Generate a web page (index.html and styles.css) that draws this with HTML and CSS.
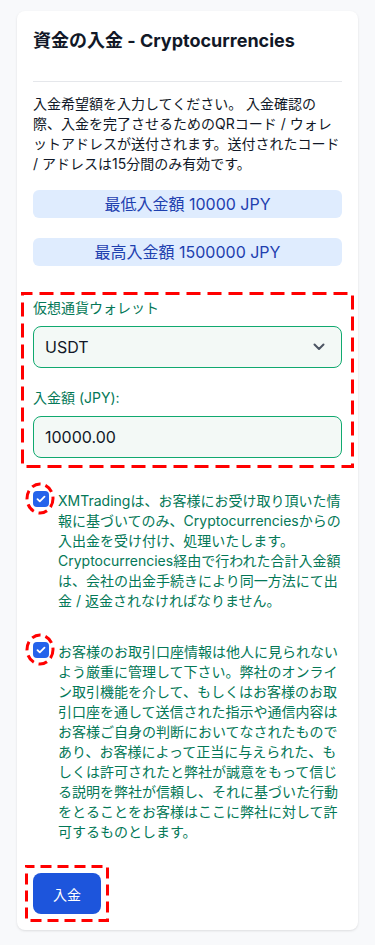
FILE: index.html
```html
<!DOCTYPE html>
<html lang="ja">
<head>
<meta charset="utf-8">
<title>資金の入金 - Cryptocurrencies</title>
<link rel="stylesheet" href="styles.css">
</head>
<body>
<div class="card">
  <h2 class="title">資金の入金 - Cryptocurrencies</h2>
  <hr class="divider">
  <p class="intro">入金希望額を入力してください。 入金確認の際、入金を完了させるためのQRコード / ウォレットアドレスが送付されます。送付されたコード / アドレスは15分間のみ有効です。</p>
  <div class="limit">最低入金額 10000 JPY</div>
  <div class="limit limit-max">最高入金額 1500000 JPY</div>

  <div class="form-group">
    <svg class="dash-frame" aria-hidden="true"><rect class="dash-rect big"/></svg>
    <label class="field-label">仮想通貨ウォレット</label>
    <div class="select">
      <span>USDT</span>
      <svg class="chevron" width="12" height="8" viewBox="0 0 12 8"><polyline points="1.5,1.5 6,6 10.5,1.5" fill="none" stroke="#4b5563" stroke-width="2" stroke-linecap="round" stroke-linejoin="round"/></svg>
    </div>
    <label class="field-label label-amount">入金額 (JPY):</label>
    <div class="input">10000.00</div>
  </div>

  <div class="check-item first">
    <span class="checkbox"><svg width="10" height="8" viewBox="0 0 10 8"><polyline points="1.5,4.2 3.8,6.4 8.5,1.6" fill="none" stroke="#fff" stroke-width="1.8" stroke-linecap="round" stroke-linejoin="round"/></svg><svg class="ring" width="30" height="33" viewBox="0 0 30 33" aria-hidden="true"><ellipse cx="15" cy="16.5" rx="13" ry="14.5" fill="none" stroke="#ff0000" stroke-width="3" stroke-dasharray="9 5"/></svg></span>
    <p class="check-text">XMTradingは、お客様にお受け取り頂いた情報に基づいてのみ、Cryptocurrenciesからの入出金を受け付け、処理いたします。Cryptocurrencies経由で行われた合計入金額は、会社の出金手続きにより同一方法にて出金 / 返金されなければなりません。</p>
  </div>

  <div class="check-item second">
    <span class="checkbox"><svg width="10" height="8" viewBox="0 0 10 8"><polyline points="1.5,4.2 3.8,6.4 8.5,1.6" fill="none" stroke="#fff" stroke-width="1.8" stroke-linecap="round" stroke-linejoin="round"/></svg><svg class="ring" width="30" height="33" viewBox="0 0 30 33" aria-hidden="true"><ellipse cx="15" cy="16.5" rx="13" ry="14.5" fill="none" stroke="#ff0000" stroke-width="3" stroke-dasharray="9 5"/></svg></span>
    <p class="check-text">お客様のお取引口座情報は他人に見られないよう厳重に管理して下さい。弊社のオンライン取引機能を介して、もしくはお客様のお取引口座を通して送信された指示や通信内容はお客様ご自身の判断においてなされたものであり、お客様によって正当に与えられた、もしくは許可されたと弊社が誠意をもって信じる説明を弊社が信頼し、それに基づいた行動をとることをお客様はここに弊社に対して許可するものとします。</p>
  </div>

  <div class="submit-wrap">
    <svg class="dash-frame" aria-hidden="true"><rect class="dash-rect small"/></svg>
    <button class="submit">入金</button>
  </div>
</div>
</body>
</html>
```

FILE: styles.css
```css
* { box-sizing: border-box; }
html, body { margin: 0; padding: 0; }
body {
  background: #f8f9fb;
  font-family: Inter, "Noto Sans CJK JP", sans-serif;
  color: #111827;
  padding: 11px 17px;
}
.card {
  background: #fff;
  border-radius: 8px;
  box-shadow: 0 1px 3px rgba(0,0,0,0.08), 0 1px 2px rgba(0,0,0,0.04);
  padding: 16px 16px 8px;
}
.title {
  margin: 0 0 26px;
  font-size: 18px;
  line-height: 28px;
  font-weight: 700;
  color: #111827;
}
.divider {
  margin: 0 0 12px;
  border: 0;
  border-top: 1px solid #e5e7eb;
  height: 0;
}
.intro {
  margin: 0 0 16px;
  font-size: 14px;
  line-height: 20px;
  color: #111827;
}
.limit {
  height: 28px;
  line-height: 28px;
  background: #dfecfe;
  border-radius: 6px;
  text-align: center;
  font-size: 16px;
  color: #1e40af;
}
.limit-max { margin-top: 20px; }

/* dashed annotation frames */
.dash-frame {
  position: absolute;
  left: -3px;
  top: -3px;
  width: calc(100% + 6px);
  height: calc(100% + 6px);
  overflow: visible;
  pointer-events: none;
}
.dash-rect {
  x: 1.5px;
  y: 1.5px;
  width: calc(100% - 3px);
  height: calc(100% - 3px);
  fill: none;
  stroke: #ff0000;
  stroke-width: 3px;
}
.dash-rect.big { stroke-dasharray: 14 7; stroke-dashoffset: 4; }
.dash-rect.small { stroke-dasharray: 11 6; stroke-dashoffset: 3; }

.form-group {
  position: relative;
  margin: 26px -12px 0;
  border: 3px solid transparent;
  padding: 3px 9px 7px;
}
.field-label {
  display: block;
  font-size: 14px;
  line-height: 20px;
  color: #047857;
  margin-bottom: 8px;
}
.label-amount { margin-top: 20px; }
.select, .input {
  height: 42px;
  border: 1px solid #10a96f;
  border-radius: 8px;
  background: #f3f9f6;
  font-size: 16px;
  color: #111827;
  padding: 0 16px 0 11px;
  display: flex;
  align-items: center;
}
.select { justify-content: space-between; }
.chevron { display: block; }
.check-item {
  display: flex;
  align-items: flex-start;
  gap: 9px;
}
.check-item.first { margin-top: 23px; }
.check-item.second { margin-top: 31px; }
.checkbox {
  position: relative;
  flex: none;
  width: 16px;
  height: 16px;
  border-radius: 4px;
  background: #2563eb;
  display: flex;
  align-items: center;
  justify-content: center;
}
.checkbox svg { display: block; }
.checkbox .ring {
  position: absolute;
  left: -8px;
  top: -9px;
  overflow: visible;
}
.check-text {
  margin: 0;
  font-size: 14px;
  line-height: 20px;
  color: #047857;
}
.submit-wrap {
  position: relative;
  display: inline-block;
  margin: 23px 0 0 -8px;
  border: 3px solid transparent;
  padding: 5px;
}
.submit {
  display: block;
  height: 41px;
  padding: 0 20px;
  border: 0;
  border-radius: 8px;
  background: #1d55dc;
  color: #fff;
  font-family: Inter, "Noto Sans CJK JP", sans-serif;
  font-size: 14px;
}
```
